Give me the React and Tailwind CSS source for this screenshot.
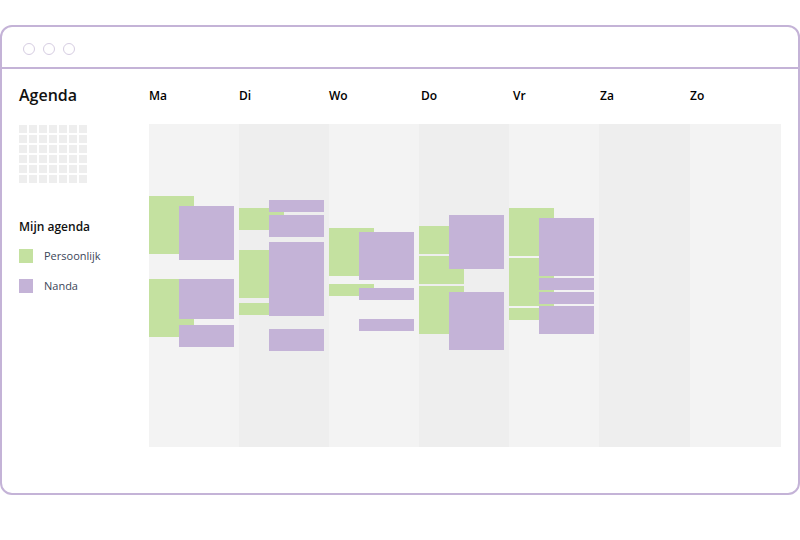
const days = [
  {
    label: 'Ma',
    shift: 'pl-0',
    green: [[72, 58], [155, 58]],
    purple: [[82, 54], [155, 40], [201, 22]],
  },
  {
    label: 'Di',
    shift: 'pl-0',
    green: [[84, 22], [126, 48], [179, 12]],
    purple: [[76, 12], [91, 22], [118, 74], [205, 22]],
  },
  {
    label: 'Wo',
    shift: 'pl-0',
    green: [[104, 48], [160, 12]],
    purple: [[108, 48], [164, 12], [195, 12]],
  },
  {
    label: 'Do',
    shift: 'pl-[2px]',
    green: [[102, 28], [132, 28], [162, 48]],
    purple: [[91, 54], [168, 58]],
  },
  {
    label: 'Vr',
    shift: 'pl-[4px]',
    green: [[84, 48], [134, 48], [184, 12]],
    purple: [[94, 58], [154, 12], [168, 12], [182, 28]],
  },
  { label: 'Za', shift: 'pl-[1px]', green: [], purple: [] },
  { label: 'Zo', shift: 'pl-0', green: [], purple: [] },
];

const font = { fontFamily: '"Open Sans", "Noto Sans", sans-serif' };

const App = () => {
  return (
    <div className="w-[800px] h-[540px] bg-white pt-[25px]" style={font}>
      <div className="w-[800px] h-[470px] border-2 border-[#c4b3d7] rounded-[12px] flex flex-col">
        {/* title bar */}
        <div className="h-[42px] border-b-2 border-[#c4b3d7] flex items-center gap-[8px] pl-[21px] pt-[3px] shrink-0">
          <span className="w-[12px] h-[12px] rounded-full border border-[#d6cde2]"></span>
          <span className="w-[12px] h-[12px] rounded-full border border-[#d6cde2]"></span>
          <span className="w-[12px] h-[12px] rounded-full border border-[#d6cde2]"></span>
        </div>

        <div className="flex flex-1">
          {/* sidebar */}
          <div className="w-[147px] pl-[17px] pt-[14px] shrink-0">
            <h1 className="text-[16px] leading-[24px] font-semibold text-[#111]">Agenda</h1>
            <div className="grid grid-cols-7 gap-[2px] w-[68px] mt-[18px]">
              {Array.from({ length: 42 }).map((_, i) => (
                <div key={i} className="w-[8px] h-[8px] bg-[#eeeeee]"></div>
              ))}
            </div>
            <h2 className="text-[12px] leading-[16px] font-semibold text-[#111] mt-[36px]">Mijn agenda</h2>
            <div className="flex items-center gap-[11px] mt-[14px]">
              <span className="w-[14px] h-[14px] bg-[#c4e1a0]"></span>
              <span className="text-[11px] leading-[14px] text-[#3b4658]">Persoonlijk</span>
            </div>
            <div className="flex items-center gap-[11px] mt-[16px]">
              <span className="w-[14px] h-[14px] bg-[#c4b3d7]"></span>
              <span className="text-[11px] leading-[14px] text-[#3b4658]">Nanda</span>
            </div>
          </div>

          {/* week */}
          <div className="w-[632px] pt-[19px]">
            <div className="grid grid-cols-[90px_90px_90px_90px_90px_91px_91px] h-[36px]">
              {days.map((d) => (
                <div key={d.label} className={`text-[12px] leading-[16px] font-semibold text-black ${d.shift}`}>
                  {d.label}
                </div>
              ))}
            </div>
            <div className="grid grid-cols-[90px_90px_90px_90px_90px_91px_91px] h-[323px]">
              {days.map((d, i) => (
                <div key={d.label} className={`relative ${i % 2 === 0 ? 'bg-[#f3f3f3]' : 'bg-[#eeeeee]'}`}>
                  {d.green.map(([top, h], j) => (
                    <div
                      key={'g' + j}
                      className="absolute left-0 w-[45px] bg-[#c4e1a0]"
                      style={{ top, height: h }}
                    ></div>
                  ))}
                  {d.purple.map(([top, h], j) => (
                    <div
                      key={'p' + j}
                      className="absolute left-[30px] w-[55px] bg-[#c4b3d7]"
                      style={{ top, height: h }}
                    ></div>
                  ))}
                </div>
              ))}
            </div>
          </div>
        </div>
      </div>
    </div>
  );
};

export default App;
